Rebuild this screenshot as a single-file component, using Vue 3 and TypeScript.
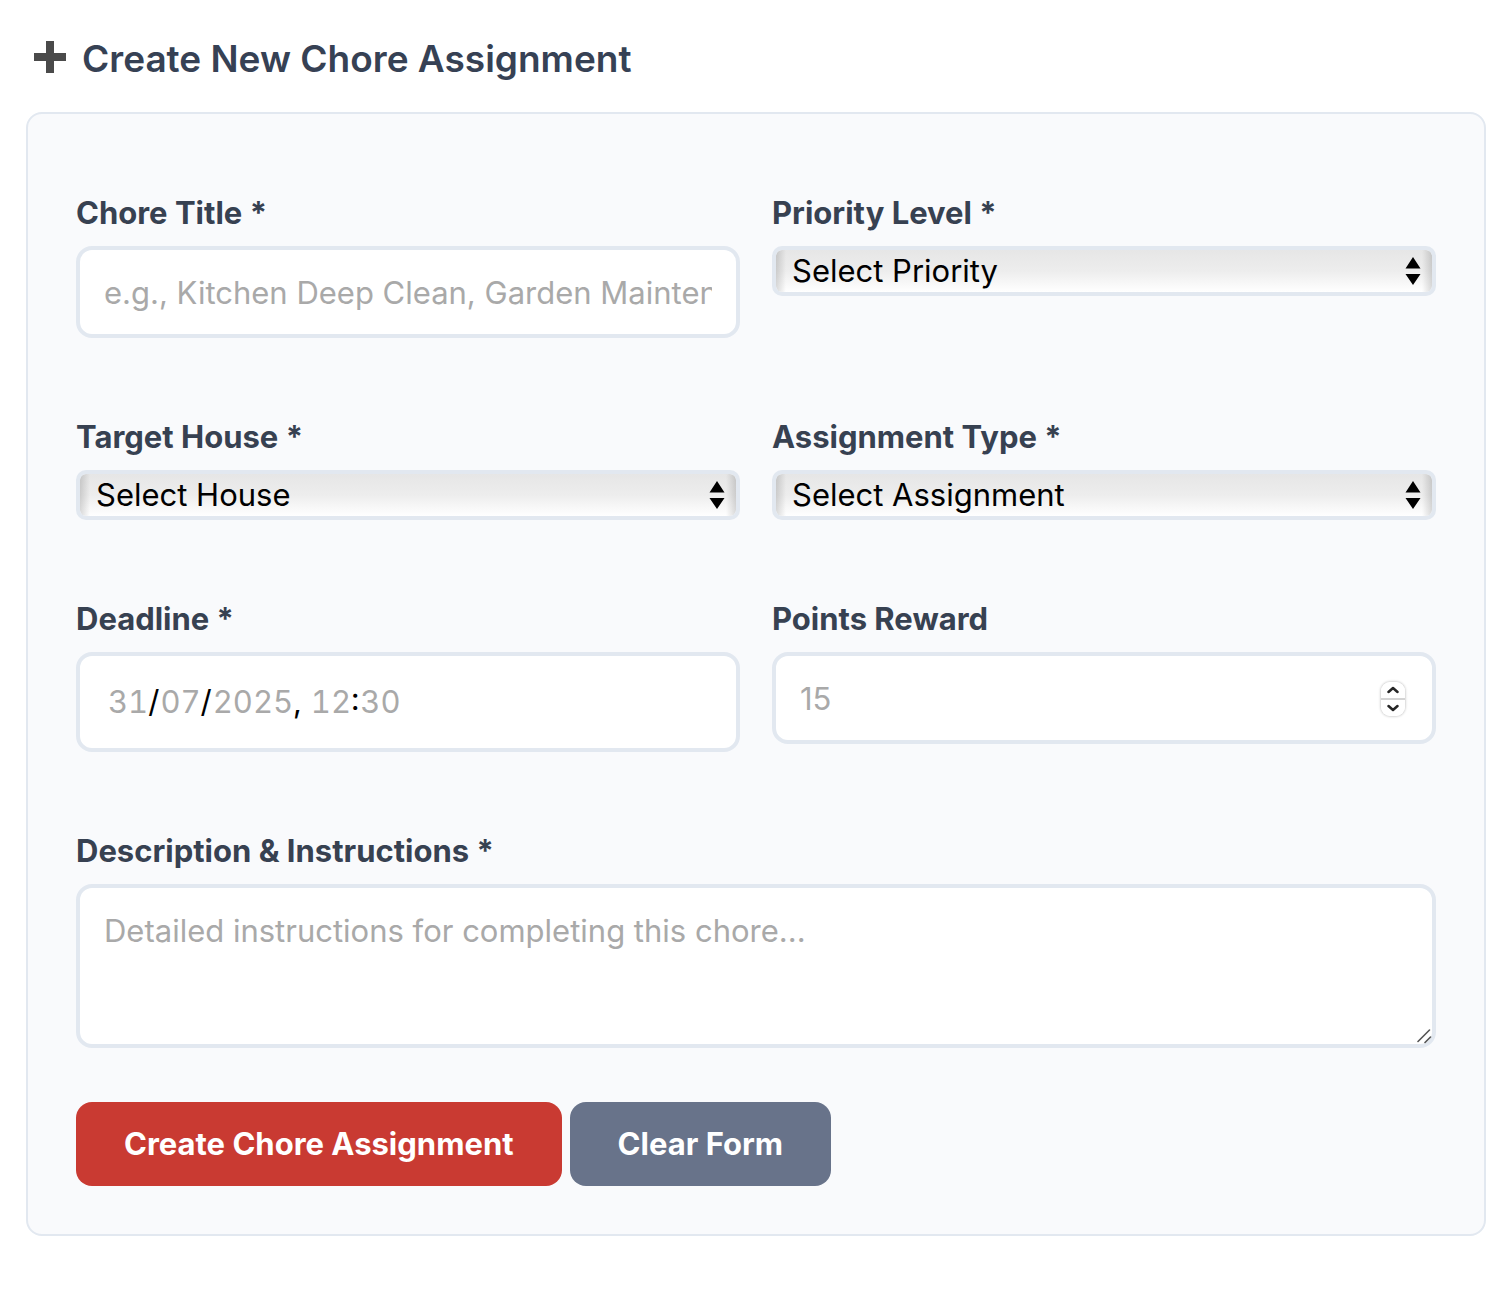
<script setup lang="ts">
import { computed, ref } from 'vue'

interface ChoreForm {
  title: string
  priority: string
  house: string
  assignment: string
  deadline: string
  points: number | ''
  description: string
}

const blank = (): ChoreForm => ({
  title: '',
  priority: '',
  house: '',
  assignment: '',
  deadline: '2025-07-31T12:30',
  points: '',
  description: '',
})

const form = ref<ChoreForm>(blank())

interface Part {
  text: string
  separator: boolean
}

// Day-first display of the chosen deadline, digits and separators apart.
const deadlineParts = computed<Part[]>(() => {
  const [date = '', time = ''] = form.value.deadline.split('T')
  const [year = 'yyyy', month = 'mm', day = 'dd'] = date ? date.split('-') : []
  const [hour = '--', minute = '--'] = time ? time.split(':') : []
  return [day, '/', month, '/', year, ', ', hour, ':', minute].map((text, i) => ({
    text,
    separator: i % 2 === 1,
  }))
})

function step(amount: number) {
  const current = form.value.points === '' ? 15 : form.value.points
  form.value.points = Math.max(0, current + amount)
}

function clear() {
  form.value = blank()
}
</script>

<template>
  <main class="page">
    <h1 class="heading">
      <svg class="plus" viewBox="0 0 32 32" aria-hidden="true">
        <path d="M12 0h8v12h12v8H20v12h-8V20H0v-8h12z" fill="#4a4a4a" />
      </svg>
      Create New Chore Assignment
    </h1>

    <form class="card" @submit.prevent>
      <div class="fields">
        <div class="field">
          <label for="title">Chore Title *</label>
          <input
            id="title"
            v-model="form.title"
            class="box"
            type="text"
            placeholder="e.g., Kitchen Deep Clean, Garden Maintenance"
          />
        </div>

        <div class="field">
          <label for="priority">Priority Level *</label>
          <div class="stack">
            <select id="priority" v-model="form.priority" class="menu">
              <option value="">Select Priority</option>
              <option value="low">Low</option>
              <option value="medium">Medium</option>
              <option value="high">High</option>
            </select>
            <svg class="arrows" viewBox="0 0 16 28" aria-hidden="true">
              <path d="M8 0l7.500 11.500H.5zM8 28L.5 17h15z" />
            </svg>
          </div>
        </div>

        <div class="field">
          <label for="house">Target House *</label>
          <div class="stack">
            <select id="house" v-model="form.house" class="menu">
              <option value="">Select House</option>
              <option value="all">All Houses</option>
            </select>
            <svg class="arrows" viewBox="0 0 16 28" aria-hidden="true">
              <path d="M8 0l7.500 11.500H.5zM8 28L.5 17h15z" />
            </svg>
          </div>
        </div>

        <div class="field">
          <label for="assignment">Assignment Type *</label>
          <div class="stack">
            <select id="assignment" v-model="form.assignment" class="menu">
              <option value="">Select Assignment</option>
              <option value="house">Whole House</option>
              <option value="person">Individual</option>
            </select>
            <svg class="arrows" viewBox="0 0 16 28" aria-hidden="true">
              <path d="M8 0l7.500 11.500H.5zM8 28L.5 17h15z" />
            </svg>
          </div>
        </div>

        <div class="field">
          <label for="deadline">Deadline *</label>
          <div class="stack">
            <input id="deadline" v-model="form.deadline" class="box date" type="datetime-local" />
            <span class="date-text" aria-hidden="true"
              ><span
                v-for="(part, i) in deadlineParts"
                :key="i"
                :class="part.separator ? 'separator' : 'digits'"
                >{{ part.text }}</span
              ></span
            >
          </div>
        </div>

        <div class="field">
          <label for="points">Points Reward</label>
          <div class="stack">
            <input id="points" v-model="form.points" class="box number" type="number" min="0" placeholder="15" />
            <span class="stepper">
              <button type="button" aria-label="More points" @click="step(1)">
                <svg viewBox="0 0 12 8" aria-hidden="true"><path d="M1.500 6L6 2l4.500 4" /></svg>
              </button>
              <button type="button" aria-label="Fewer points" @click="step(-1)">
                <svg viewBox="0 0 12 8" aria-hidden="true"><path d="M1.500 2L6 6l4.500-4" /></svg>
              </button>
            </span>
          </div>
        </div>

        <div class="field wide">
          <label for="description">Description &amp; Instructions *</label>
          <textarea
            id="description"
            v-model="form.description"
            class="box area"
            placeholder="Detailed instructions for completing this chore..."
          ></textarea>
        </div>
      </div>

      <div class="actions">
        <button class="action create" type="submit">Create Chore Assignment</button>
        <button class="action clear" type="button" @click="clear">Clear Form</button>
      </div>
    </form>
  </main>
</template>

<style>
body {
  margin: 0;
  background: #fff;
}
</style>

<style scoped>
.page,
.page * {
  box-sizing: border-box;
}

.page {
  padding: 34px 26px 74px;
  font-family: Inter, 'Liberation Sans', sans-serif;
  font-size: 31px;
  line-height: 38px;
  color: #374151;
}

.page input,
.page select,
.page textarea,
.page button {
  margin: 0;
  font-family: inherit;
  font-size: inherit;
  line-height: inherit;
}

.heading {
  display: flex;
  align-items: center;
  gap: 16px;
  margin: 0 0 28px;
  padding-left: 8px;
  font-size: 37px;
  line-height: 50px;
  font-weight: 600;
  color: #364154;
}

.plus {
  width: 32px;
  height: 32px;
  margin-bottom: 4px;
}

.card {
  padding: 80px 48px 48px;
  border: 2px solid #e2e8f0;
  border-radius: 16px;
  background: #f9fafc;
}

.fields {
  display: grid;
  grid-template-columns: repeat(2, minmax(0, 1fr));
  gap: 80px 32px;
  align-items: start;
}

.field {
  display: flex;
  flex-direction: column;
  gap: 14px;
}

.wide {
  grid-column: 1 / -1;
}

label {
  font-weight: 650;
}

.box {
  width: 100%;
  height: 92px;
  padding: 0 24px;
  border: 4px solid #e2e8f0;
  border-radius: 16px;
  background: #fff;
  color: #000;
}

.box::placeholder {
  color: #a9a9a9;
  opacity: 1;
}

.stack {
  display: grid;
  align-items: center;
}

.stack > * {
  grid-area: 1 / 1;
}

.menu {
  width: 100%;
  height: 50px;
  padding: 0 60px 0 16px;
  appearance: none;
  border: 4px solid #e2e8f0;
  border-radius: 10px;
  background:
    linear-gradient(to right, #00000024, #0000 10px, #0000 calc(100% - 10px), #00000024) padding-box,
    linear-gradient(#e6e6e6, #ededed 50%, #fff) padding-box;
  color: #000;
}

.arrows {
  justify-self: end;
  width: 16px;
  height: 28px;
  margin-right: 15px;
  pointer-events: none;
}

.page .date {
  height: 100px;
}

.date::-webkit-datetime-edit {
  opacity: 0;
}

.date::-webkit-calendar-picker-indicator {
  opacity: 0;
}

.date-text {
  padding-left: 31px;
  font-variant-numeric: tabular-nums;
  white-space: pre;
  pointer-events: none;
}

.digits {
  padding-left: 1px;
  color: #a9a9a9;
}

.separator {
  color: #000;
}

.number {
  appearance: textfield;
}

.number::-webkit-inner-spin-button {
  appearance: none;
}

.stepper {
  display: flex;
  flex-direction: column;
  justify-self: end;
  width: 24px;
  height: 34px;
  margin: 2px 31px 0 0;
  border-radius: 9px;
  background: #fff;
  box-shadow: 0 0 3px #0005;
  overflow: hidden;
}

.stepper button {
  display: flex;
  flex: 1;
  align-items: center;
  justify-content: center;
  padding: 0;
  border: 0;
  background: #fff;
}

.stepper button + button {
  border-top: 2px solid #d4d4d4;
}

.stepper svg {
  width: 12px;
  height: 8px;
  fill: none;
  stroke: #262626;
  stroke-width: 2.5;
  stroke-linecap: round;
  stroke-linejoin: round;
}

.page .area {
  display: block;
  height: 164px;
  padding: 24px;
  resize: vertical;
}

.area::-webkit-resizer {
  background: url("data:image/svg+xml,%3Csvg xmlns='http://www.w3.org/2000/svg' width='15' height='15'%3E%3Cpath d='M1 12.500L12.500 1M8 13.500l5.500-5.500' stroke='%23555' stroke-width='1.600' stroke-linecap='round'/%3E%3C/svg%3E")
    no-repeat;
}

.actions {
  display: flex;
  gap: 8px;
  margin-top: 54px;
}

.action {
  height: 84px;
  padding: 0 48px;
  border: 0;
  border-radius: 16px;
  color: #fff;
  font-weight: 650;
  cursor: pointer;
}

.create {
  background: #c93a32;
}

.clear {
  background: #68738a;
}
</style>
